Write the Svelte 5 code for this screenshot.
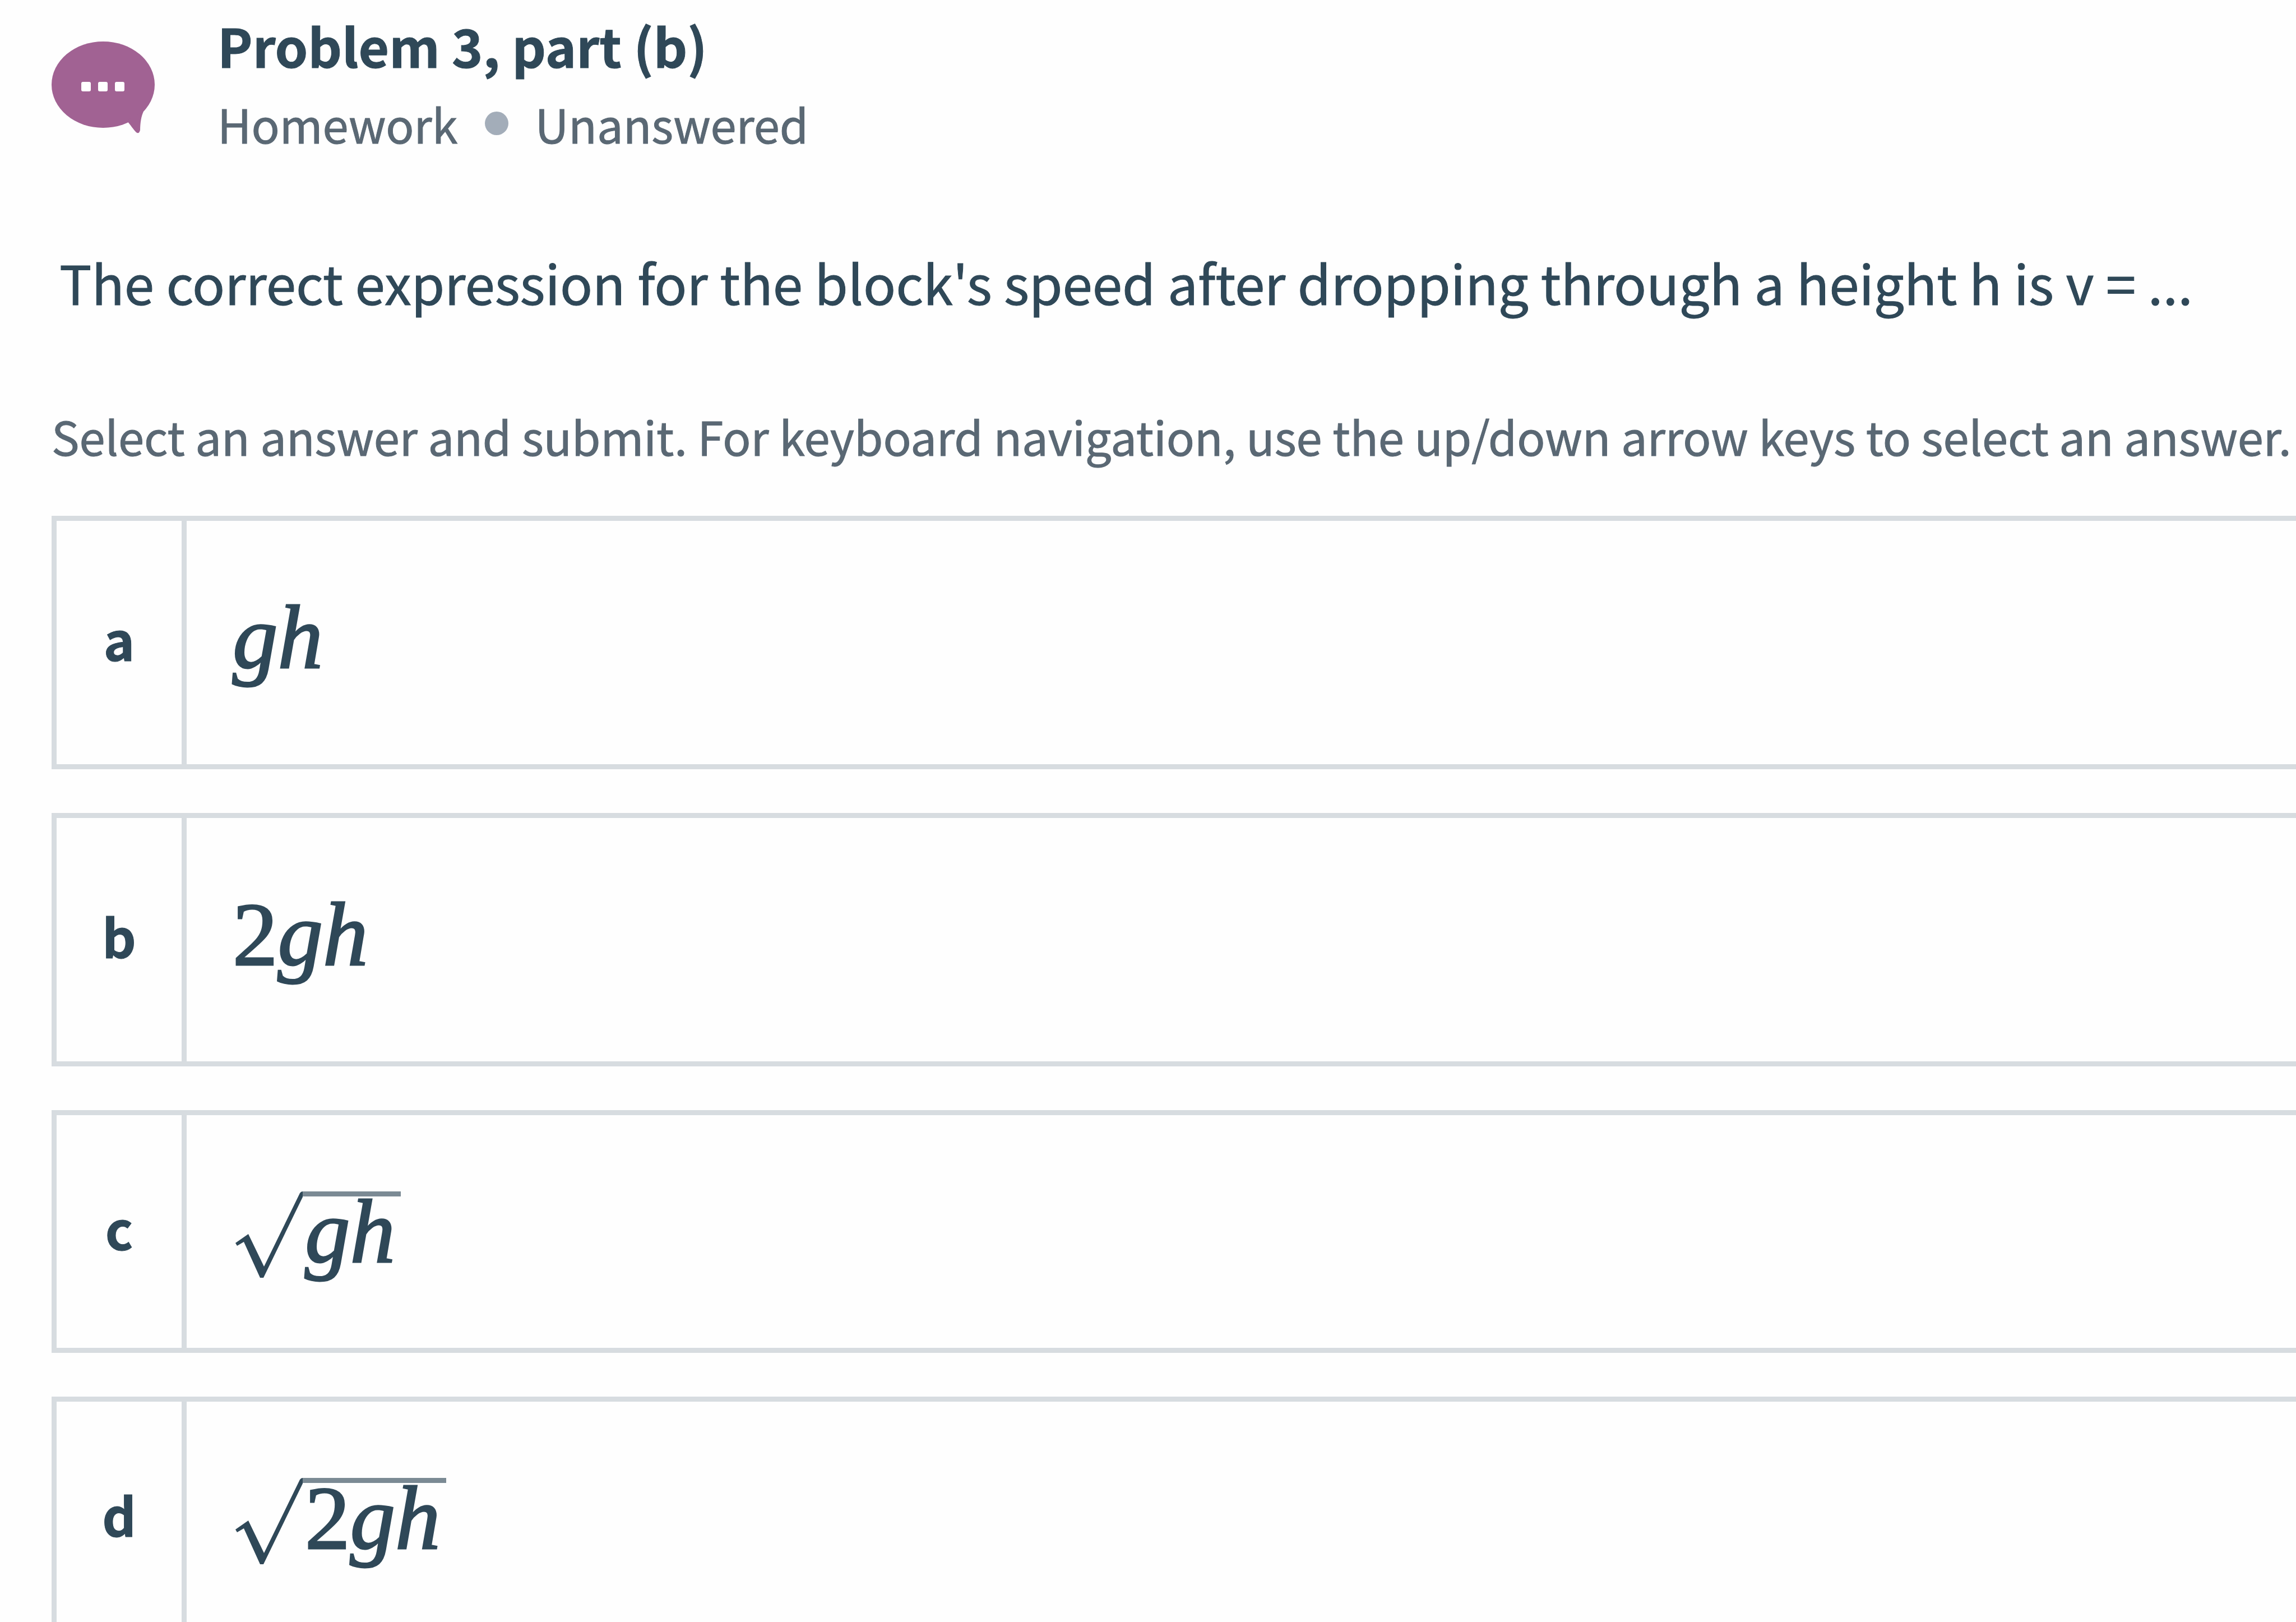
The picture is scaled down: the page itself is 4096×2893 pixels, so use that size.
<script>
  const options = [
    { key: 'a', number: '', root: false },
    { key: 'b', number: '2', root: false },
    { key: 'c', number: '', root: true },
    { key: 'd', number: '2', root: true }
  ];
  let selected = $state('');
</script>

<main class="page">
  <header class="header">
    <svg class="bubble" viewBox="0 0 184 165" aria-hidden="true">
      <ellipse cx="92" cy="78" rx="92" ry="77" fill="#a16293" />
      <path d="M134 142 C141 150 146 158 151 163 Q156 167 158 159 C158 146 160 134 164 126 Z" fill="#a16293" />
      <rect x="53" y="73" width="17" height="17" rx="3" fill="#fff" />
      <rect x="83" y="73" width="17" height="17" rx="3" fill="#fff" />
      <rect x="113" y="73" width="17" height="17" rx="3" fill="#fff" />
    </svg>
    <div class="heading">
      <h1 class="title">Problem 3, part (b)</h1>
      <p class="meta">
        <span>Homework</span>
        <span class="dot"></span>
        <span>Unanswered</span>
      </p>
    </div>
  </header>

  <p class="question" id="question">The correct expression for the block's speed after dropping through a height h is v = ...</p>
  <p class="hint" id="hint">Select an answer and submit. For keyboard navigation, use the up/down arrow keys to select an answer.</p>

  <div class="options" role="radiogroup" aria-labelledby="question" aria-describedby="hint">
    {#each options as option (option.key)}
      <label class="option" class:rooted={option.root}>
        <input class="radio" type="radio" name="answer" value={option.key} bind:group={selected} />
        <span class="key">{option.key}</span>
        <span class="answer">
          {#if option.root}
            <svg class="radical" viewBox="0 0 120 156" aria-hidden="true">
              <path d="M0 92 L23 76 L51 134 L115 3 Q117 0 120 0 V10 L50 154 H44 L15 90 L3 97 Z" fill="#2f4858" />
            </svg>
          {/if}
          <span class="math" class:radicand={option.root}>{option.number}<i>gh</i></span>
        </span>
      </label>
    {/each}
  </div>
</main>

<style>
  :global(body) {
    margin: 0;
    background: #fefefe;
  }

  .page {
    box-sizing: border-box;
    height: 100vh;
    overflow: hidden;
    padding: 20px 0 0 92px;
    color: #2f4858;
    font-family: "Noto Sans CJK SC", "Open Sans", sans-serif;
    font-size: 94px;
    line-height: 120px;
    -webkit-text-stroke: 1px currentColor;
  }

  .header {
    display: flex;
    gap: 112px;
  }

  .bubble {
    flex: none;
    width: 184px;
    height: 165px;
    margin-top: 53px;
  }

  .heading {
    display: flex;
    flex-direction: column;
    gap: 20px;
  }

  .title,
  .meta,
  .question,
  .hint {
    margin: 0;
  }

  .title {
    font-size: 94px;
    font-weight: 700;
  }

  .meta {
    display: flex;
    align-items: center;
    gap: 48px;
    color: #5a6874;
    font-size: 83px;
  }

  .dot {
    width: 42px;
    height: 42px;
    border-radius: 50%;
    background: #a3adb9;
  }

  .question {
    margin-top: 163px;
    padding-left: 14px;
    font-size: 96px;
    white-space: nowrap;
  }

  .hint {
    margin-top: 154px;
    color: #5a6874;
    font-size: 83px;
    white-space: nowrap;
  }

  .options {
    display: flex;
    flex-direction: column;
    gap: 78px;
    margin-top: 83px;
  }

  .option {
    position: relative;
    box-sizing: border-box;
    display: flex;
    flex: none;
    min-height: 452px;
    border: 9px solid #d7dce0;
    border-right: 0;
    cursor: pointer;
  }

  .option.rooted {
    min-height: 433px;
  }

  .radio {
    position: absolute;
    opacity: 0;
  }

  .key {
    box-sizing: border-box;
    display: flex;
    align-items: center;
    justify-content: center;
    width: 232px;
    padding-bottom: 16px;
    border-right: 9px solid #d7dce0;
    font-weight: 700;
  }

  .answer {
    display: flex;
    align-items: center;
    padding: 0 0 18px 82px;
  }

  .rooted .answer {
    padding: 12px 0 0 87px;
  }

  .radical {
    width: 120px;
    height: 156px;
  }

  .math {
    font-family: "Liberation Serif", serif;
    font-size: 161px;
    line-height: 126px;
    -webkit-text-stroke: 3px currentColor;
  }

  .math.radicand {
    box-sizing: border-box;
    height: 156px;
    padding: 0 10px 0 4px;
    border-top: 9px solid #7b8a94;
  }
</style>
